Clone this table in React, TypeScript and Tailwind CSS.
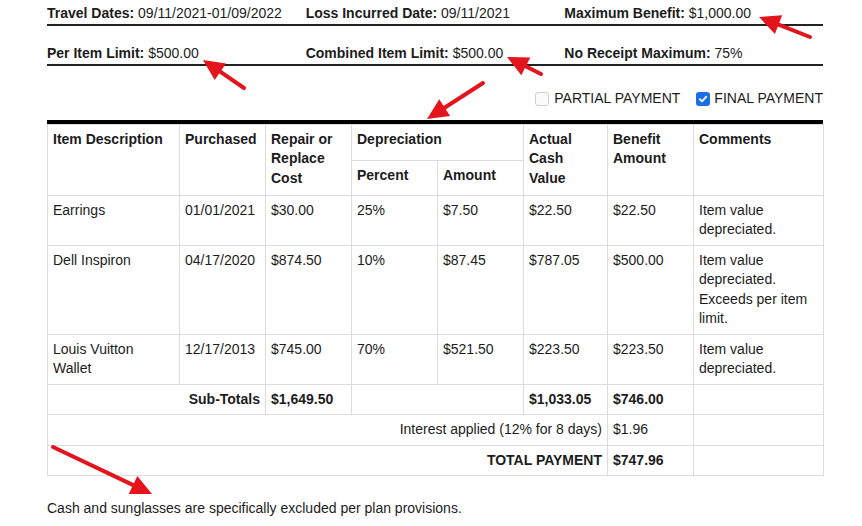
import React from 'react';

type Arrow = { x1: number; y1: number; x2: number; y2: number };

// red annotation arrows drawn over the form (tail -> tip)
const ARROWS: Arrow[] = [
  { x1: 810, y1: 37, x2: 759, y2: 17 },
  { x1: 244, y1: 88, x2: 203, y2: 60 },
  { x1: 541, y1: 74, x2: 507, y2: 57 },
  { x1: 483, y1: 83, x2: 427, y2: 119 },
  { x1: 53, y1: 447, x2: 152, y2: 494 },
];

const ArrowShape = ({ a }: { a: Arrow }) => {
  const dx = a.x2 - a.x1;
  const dy = a.y2 - a.y1;
  const len = Math.hypot(dx, dy);
  const ux = dx / len;
  const uy = dy / len;
  const head = 21;
  const half = 10;
  const bx = a.x2 - ux * head;
  const by = a.y2 - uy * head;
  const pts = `${a.x2},${a.y2} ${bx - uy * half},${by + ux * half} ${bx + uy * half},${by - ux * half}`;
  return (
    <g>
      <line x1={a.x1} y1={a.y1} x2={bx + ux * 2} y2={by + uy * 2} stroke="#e3141c" strokeWidth={4} strokeLinecap="round" />
      <polygon points={pts} fill="#e3141c" />
    </g>
  );
};

const Field = ({ label, value }: { label: string; value: string }) => (
  <div>
    <span className="font-bold">{label}</span> {value}
  </div>
);

const Box = ({ checked }: { checked?: boolean }) =>
  checked ? (
    <span className="w-[14px] h-[14px] rounded-[3px] bg-[#1a6fe8] flex items-center justify-center">
      <svg width="10" height="10" viewBox="0 0 10 10">
        <path d="M1.8 5.2 L4 7.4 L8.3 2.6" stroke="white" strokeWidth="1.8" fill="none" strokeLinecap="round" strokeLinejoin="round" />
      </svg>
    </span>
  ) : (
    <span className="w-[14px] h-[14px] rounded-[3px] border border-[#cfcfcf] bg-[#fafafa]" />
  );

const td = 'border border-[#dcdcdc] px-[5px] py-[5px] align-top text-left font-normal';
const th = 'border border-[#dcdcdc] px-[5px] py-[5px] align-top text-left font-bold';

const rows = [
  { item: 'Earrings', date: '01/01/2021', cost: '$30.00', pct: '25%', amt: '$7.50', acv: '$22.50', benefit: '$22.50', note: 'Item value depreciated.' },
  { item: 'Dell Inspiron', date: '04/17/2020', cost: '$874.50', pct: '10%', amt: '$87.45', acv: '$787.05', benefit: '$500.00', note: 'Item value depreciated. Exceeds per item limit.' },
  { item: 'Louis Vuitton Wallet', date: '12/17/2013', cost: '$745.00', pct: '70%', amt: '$521.50', acv: '$223.50', benefit: '$223.50', note: 'Item value depreciated.' },
];

export default function App() {
  return (
    <div className="relative w-[862px] h-[526px] bg-white text-[#1c1c1c] text-[14px] leading-[19.5px] font-['Liberation_Sans',Arial,sans-serif]">
      <div className="ml-[47px] w-[776px]">
        <div className="grid grid-cols-3 pt-[4px] pb-[0.5px] border-b-2 border-[#222]">
          <Field label="Travel Dates:" value="09/11/2021-01/09/2022" />
          <Field label="Loss Incurred Date:" value="09/11/2021" />
          <Field label="Maximum Benefit:" value="$1,000.00" />
        </div>
        <div className="grid grid-cols-3 pt-[18px] pb-[0.5px] border-b-2 border-[#222]">
          <Field label="Per Item Limit:" value="$500.00" />
          <Field label="Combined Item Limit:" value="$500.00" />
          <Field label="No Receipt Maximum:" value="75%" />
        </div>

        <div className="flex justify-end items-center gap-[16px] mt-[23px] mb-[11px]">
          <label className="flex items-center gap-[5px]">
            <Box />
            <span>PARTIAL PAYMENT</span>
          </label>
          <label className="flex items-center gap-[4px]">
            <Box checked />
            <span>FINAL PAYMENT</span>
          </label>
        </div>

        <div className="h-[4px] bg-black" />
        <table className="w-full table-fixed border-collapse">
          <colgroup>
            <col className="w-[132px]" />
            <col className="w-[86px]" />
            <col className="w-[86px]" />
            <col className="w-[86px]" />
            <col className="w-[86px]" />
            <col className="w-[84px]" />
            <col className="w-[86px]" />
            <col className="w-[130px]" />
          </colgroup>
          <thead>
            <tr className="h-[36px]">
              <th rowSpan={2} className={th}>Item Description</th>
              <th rowSpan={2} className={th}>Purchased</th>
              <th rowSpan={2} className={th}>Repair or Replace Cost</th>
              <th colSpan={2} className={th}>Depreciation</th>
              <th rowSpan={2} className={th}>Actual Cash Value</th>
              <th rowSpan={2} className={th}>Benefit Amount</th>
              <th rowSpan={2} className={th}>Comments</th>
            </tr>
            <tr className="h-[35px]">
              <th className={th}>Percent</th>
              <th className={th}>Amount</th>
            </tr>
          </thead>
          <tbody>
            {rows.map((r) => (
              <tr key={r.item}>
                <td className={td}>{r.item}</td>
                <td className={td}>{r.date}</td>
                <td className={td}>{r.cost}</td>
                <td className={td}>{r.pct}</td>
                <td className={td}>{r.amt}</td>
                <td className={td}>{r.acv}</td>
                <td className={td}>{r.benefit}</td>
                <td className={td}>{r.note}</td>
              </tr>
            ))}
            <tr>
              <td colSpan={2} className={`${th} text-right`}>Sub-Totals</td>
              <td className={th}>$1,649.50</td>
              <td colSpan={2} className={td}></td>
              <td className={th}>$1,033.05</td>
              <td className={th}>$746.00</td>
              <td className={td}></td>
            </tr>
            <tr>
              <td colSpan={6} className={`${td} text-right`}>Interest applied (12% for 8 days)</td>
              <td className={td}>$1.96</td>
              <td className={td}></td>
            </tr>
            <tr>
              <td colSpan={6} className={`${th} text-right`}>TOTAL PAYMENT</td>
              <td className={th}>$747.96</td>
              <td className={td}></td>
            </tr>
          </tbody>
        </table>

        <p className="mt-[23px]">Cash and sunglasses are specifically excluded per plan provisions.</p>
      </div>

      <svg className="absolute inset-0 pointer-events-none" width="862" height="526">
        {ARROWS.map((a, i) => (
          <ArrowShape key={i} a={a} />
        ))}
      </svg>
    </div>
  );
}
